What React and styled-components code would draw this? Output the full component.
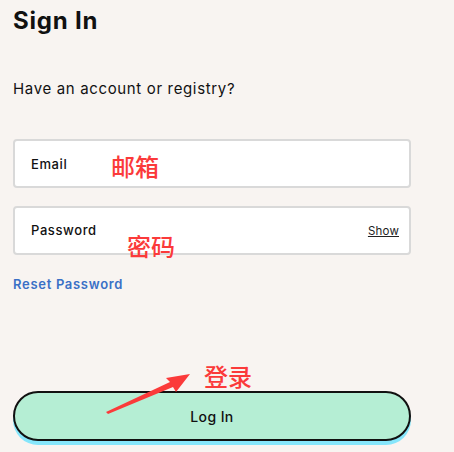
import React, { useState } from 'react';
import styled, { createGlobalStyle } from 'styled-components';

const GlobalStyle = createGlobalStyle`
  html, body {
    margin: 0;
    padding: 0;
    background: #f8f4f1;
  }
  body {
    font-family: Inter, "Noto Sans", "Liberation Sans", sans-serif;
    color: #111;
  }
`;

const Page = styled.div`
  position: relative;
  width: 454px;
  height: 452px;
  overflow: hidden;
  background: #f8f4f1;
`;

const Form = styled.form`
  width: 398px;
  padding: 6px 0 0 13px;
  display: flex;
  flex-direction: column;
`;

const Title = styled.h1`
  margin: 0;
  font-size: 24px;
  line-height: 30px;
  font-weight: 700;
  letter-spacing: 0.8px;
`;

const Subtitle = styled.p`
  margin: 44px 0 0;
  font-size: 15px;
  line-height: 18px;
  font-weight: 400;
  letter-spacing: 0.65px;
`;

const Fields = styled.div`
  margin-top: 41px;
  display: flex;
  flex-direction: column;
  gap: 18px;
`;

const InputBox = styled.label`
  box-sizing: border-box;
  height: 49px;
  display: flex;
  align-items: center;
  padding: 0 10px 0 16px;
  background: #fff;
  border: 2px solid #d9d9d9;
  border-radius: 4px;
`;

const InputLabel = styled.span`
  flex: 1;
  font-size: 13px;
  font-weight: 500;
  letter-spacing: 0.6px;
  margin-top: ${(p) => p.$shift || 0}px;
`;

const ShowLink = styled.button`
  border: 0;
  background: none;
  padding: 0;
  font-family: inherit;
  font-size: 11.5px;
  letter-spacing: 0.2px;
  color: #222;
  text-decoration: underline;
  cursor: pointer;
`;

const ResetLink = styled.a`
  margin-top: 21px;
  align-self: flex-start;
  font-size: 13px;
  font-weight: 600;
  color: #3a70c6;
  text-decoration: none;
  letter-spacing: 0.7px;
`;

const LoginButton = styled.button`
  margin-top: 99px;
  box-sizing: border-box;
  height: 50px;
  width: 100%;
  border: 2px solid #111;
  border-radius: 25px;
  background: #b5eed4;
  box-shadow: 0 4px 0 #86e6fb;
  font-family: inherit;
  font-size: 14px;
  font-weight: 500;
  letter-spacing: 0.4px;
  color: #111;
  cursor: pointer;
`;

const Note = styled.span`
  position: absolute;
  left: ${(p) => p.$x}px;
  top: ${(p) => p.$y}px;
  font-family: "Noto Sans CJK SC", sans-serif;
  font-size: 24px;
  line-height: 26px;
  font-weight: 500;
  color: #fb3a3a;
`;

const Arrow = styled.svg`
  position: absolute;
  left: 100px;
  top: 366px;
`;

export default function App() {
  const [show, setShow] = useState(false);
  return (
    <Page>
      <GlobalStyle />
      <Form onSubmit={(e) => e.preventDefault()}>
        <Title>Sign In</Title>
        <Subtitle>Have an account or registry?</Subtitle>
        <Fields>
          <InputBox>
            <InputLabel $shift={0}>Email</InputLabel>
          </InputBox>
          <InputBox>
            <InputLabel $shift={-1}>Password</InputLabel>
            <ShowLink type="button" onClick={() => setShow(!show)}>
              {show ? 'Hide' : 'Show'}
            </ShowLink>
          </InputBox>
        </Fields>
        <ResetLink href="#">Reset Password</ResetLink>
        <LoginButton type="submit">Log In</LoginButton>
      </Form>

      <Note $x={111} $y={153}>邮箱</Note>
      <Note $x={127} $y={233}>密码</Note>
      <Note $x={204} $y={363}>登录</Note>
      <Arrow width="96" height="52" viewBox="0 0 96 52">
        <polygon points="6,46 70,16 66,12 90,8 76,26 73,21 8,48" fill="#fb3a3a" />
      </Arrow>
    </Page>
  );
}
